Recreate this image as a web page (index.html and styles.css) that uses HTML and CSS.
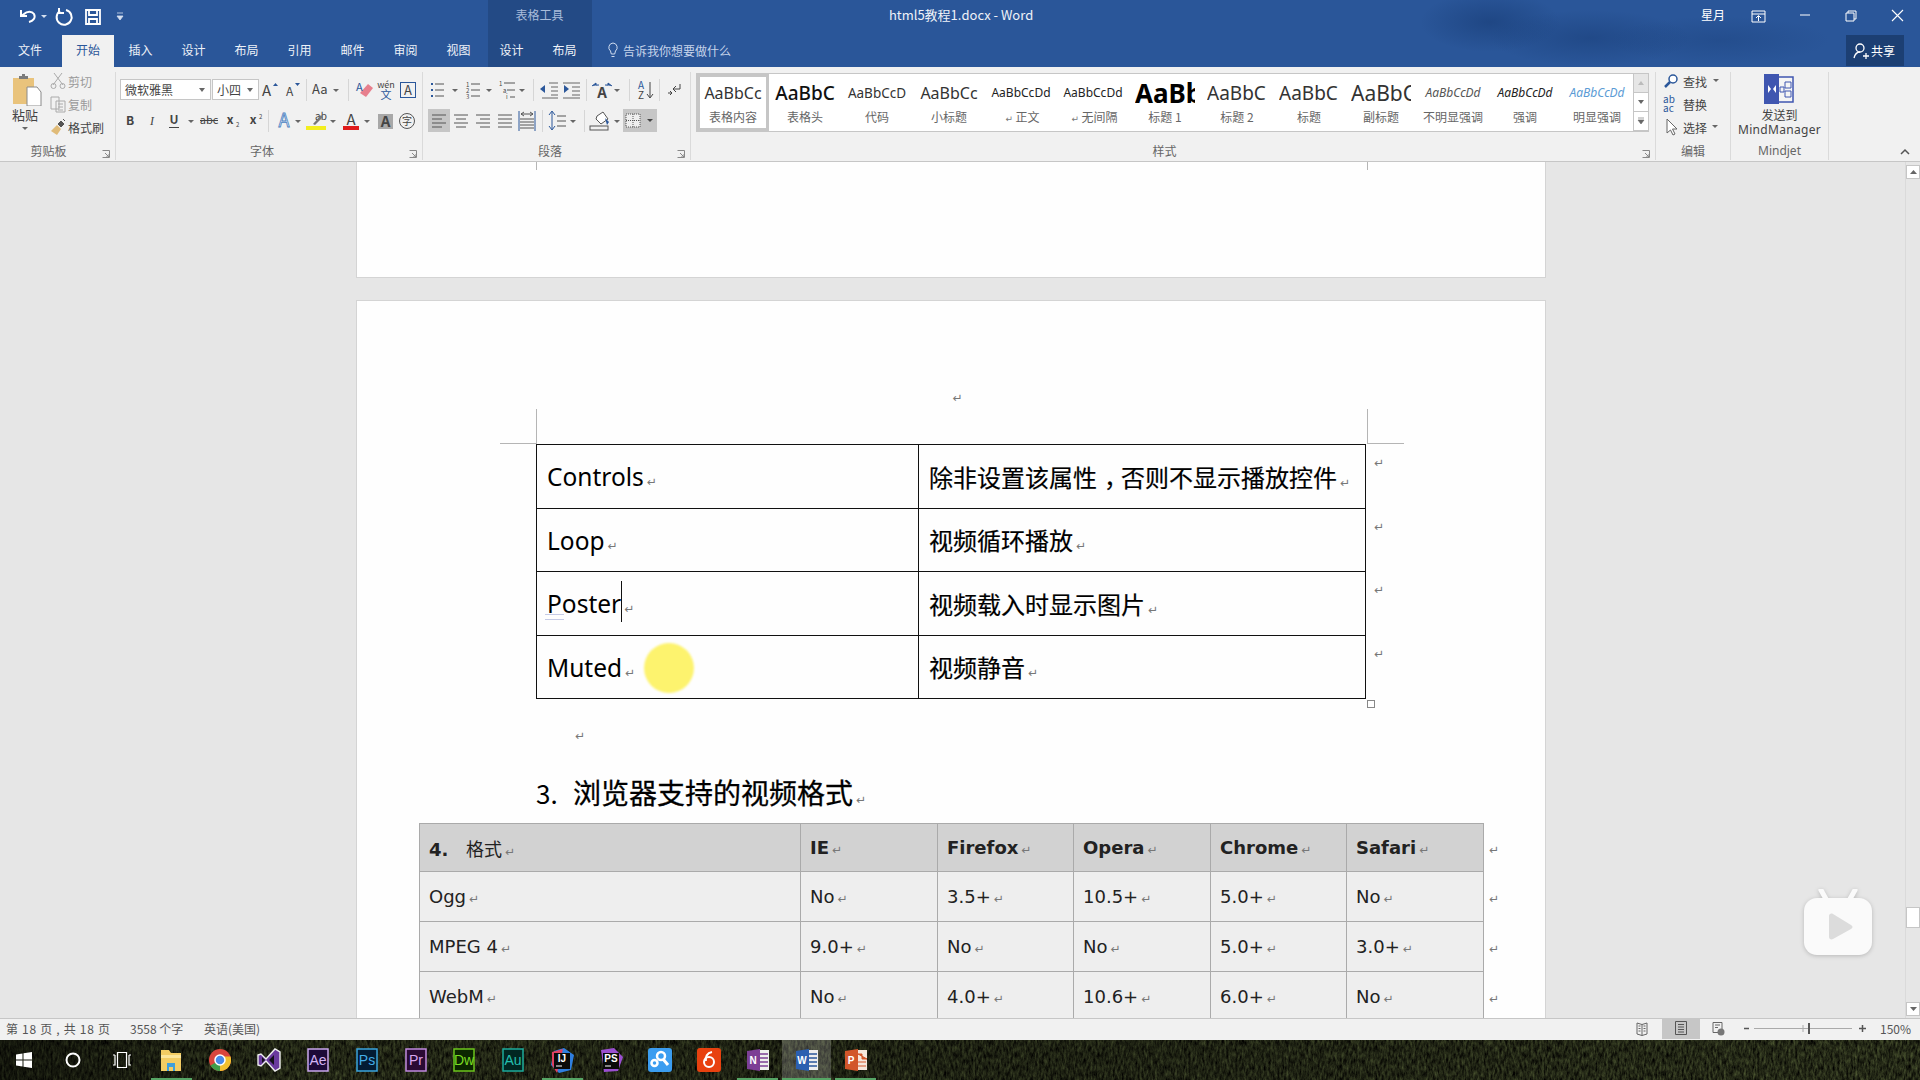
FILE: index.html
```html
<!DOCTYPE html>
<html lang="zh-CN">
<head>
    <meta charset="UTF-8">
    <title>html5教程1.docx - Word</title>
    <link rel="stylesheet" href="styles.css">
</head>
<body>
<div class="app">
    <!-- title bar + tabs -->
    <header class="titlebar">
        <div class="context-band"></div>
        <div class="title-row">
            <div class="qat">
                <svg width="28" height="35"><path d="M18 22c4-1 7-4 5-8-2-3-7-3-10 0l-3 2M10 10v6h6" fill="none" stroke="#fff" stroke-width="2"/></svg>
                <svg width="12" height="35"><path d="M2 15h6l-3 3z" fill="#d5e0f0"/></svg>
                <svg width="24" height="35"><path d="M15 10a7.500 7.500 0 1 1-6 1M8 8v5h5" fill="none" stroke="#fff" stroke-width="2"/></svg>
                <svg width="36" height="35"><path d="M11 10h14v14H11zM14 10v5h8v-5M14 24v-5h8v5" fill="none" stroke="#fff" stroke-width="1.800"/></svg>
                <svg width="20" height="35"><path d="M6 13h6M6 16h6l-3 4z" fill="#d5e0f0" stroke="#d5e0f0" stroke-width=".8"/></svg>
            </div>
            <div class="context-label">表格工具</div>
            <div class="doc-title">html5教程1.docx - Word</div>
            <div class="window-ctl">
                <span class="account">星月</span>
                <svg width="37" height="35"><path d="M6 12h13v11H6zM6 15h13M12.500 22v-5M10 19l2.500-2.500L15 19" fill="none" stroke="#fff"/></svg>
                <svg width="45" height="35"><path d="M17 16h10" stroke="#fff"/></svg>
                <svg width="46" height="35"><path d="M18 14h8v8h-8zM20 14v-2h8v8h-2" fill="none" stroke="#fff"/></svg>
                <svg width="46" height="35"><path d="M18 11l11 11M29 11L18 22" stroke="#fff" stroke-width="1.100"/></svg>
            </div>
        </div>
        <nav class="tab-row">
            <a class="tab tab-file">文件</a>
            <a class="tab tab-active">开始</a>
            <a class="tab">插入</a>
            <a class="tab">设计</a>
            <a class="tab">布局</a>
            <a class="tab">引用</a>
            <a class="tab">邮件</a>
            <a class="tab">审阅</a>
            <a class="tab">视图</a>
            <a class="tab">设计</a>
            <a class="tab">布局</a>
            <div class="tell-me">
                <svg width="12" height="16"><path d="M6 1a4.500 4.500 0 0 0-2.500 8l.8 3h3.400l.8-3A4.500 4.500 0 0 0 6 1zM4.500 14.500h3" fill="none" stroke="#cfdcf0"/></svg>
                <span>告诉我你想要做什么</span>
            </div>
            <div class="share">
                <svg width="18" height="18"><circle cx="8" cy="6" r="4" fill="none" stroke="#fff" stroke-width="1.300"/><path d="M2 16c1-4 3-6 6-6M11 14h6M14 11v6" fill="none" stroke="#fff" stroke-width="1.300"/></svg>
                <span>共享</span>
            </div>
        </nav>
    </header>

    <!-- ribbon -->
    <section class="ribbon">
        <div class="group group-clip">
            <div class="clip-body">
                <div class="paste">
                    <svg width="34" height="32">
                        <rect x="5" y="4" width="21" height="26" fill="#e9c37c"/>
                        <path d="M11 5h9V2h-3V0h-3v2h-3z" fill="#7b7b7b"/>
                        <path d="M19 13h10l4 5v14H19z" fill="#fff" stroke="#8a8a8a"/>
                    </svg>
                    <span>粘贴</span>
                    <svg width="10" height="8"><path d="M2 3h6l-3 3z" fill="#666"/></svg>
                </div>
                <div class="clip-list">
                    <div class="clip-row muted">
                        <svg width="16" height="18"><path d="M4 1l9 12M12 1L3 13" stroke="#aaa" fill="none"/><circle cx="3.500" cy="14" r="2.500" fill="none" stroke="#aaa"/><circle cx="12.500" cy="14" r="2.500" fill="none" stroke="#aaa"/></svg>
                        <span>剪切</span>
                    </div>
                    <div class="clip-row muted">
                        <svg width="16" height="18"><path d="M1 2h8v12H1zM6 6h9v11H6zM8 9h5M8 12h5M8 15h5" fill="#f1f1f1" stroke="#aaa"/></svg>
                        <span>复制</span>
                    </div>
                    <div class="clip-row">
                        <svg width="16" height="18"><path d="M1 13l6-6 4 4-4 6z" fill="#e0bb78"/><path d="M8 6l3-3 3 3-3 3zM13 1l2 2" fill="#555" stroke="#555"/></svg>
                        <span>格式刷</span>
                    </div>
                </div>
            </div>
            <div class="group-label">剪贴板</div>
            <svg class="launcher" width="8" height="8"><path d="M.5.500h7v7h-7M3 3l4 4M7 4v3H4" fill="none" stroke="#888"/></svg>
        </div>

        <div class="group group-font">
            <div class="tool-row first-row">
                <div class="combo combo-font"><span>微软雅黑</span><svg width="8" height="6"><path d="M1 1h6L4 5z" fill="#666"/></svg></div>
                <div class="combo combo-size"><span>小四</span><svg width="8" height="6"><path d="M1 1h6L4 5z" fill="#666"/></svg></div>
                <svg width="22" height="23"><text x="3" y="18" font-size="15">A</text><path d="M14 8l2.500-3L19 8z" fill="#2b579a"/></svg>
                <svg width="22" height="23"><text x="5" y="18" font-size="12">A</text><path d="M14 5h5l-2.500 3z" fill="#2b579a"/></svg>
                <i class="sep"></i>
                <svg width="35" height="23"><text x="2" y="16" font-size="13">Aa</text><path d="M23 11h6l-3 3z" fill="#666"/></svg>
                <i class="sep"></i>
                <svg width="24" height="23"><path d="M8 15l8-9 5 4-7 9z" fill="#e77f8d"/><text x="4" y="13" font-size="11" fill="#2b579a">A</text></svg>
                <svg width="20" height="23"><text x="10" y="10" font-size="9" text-anchor="middle">wén</text><text x="10" y="21" font-size="11" text-anchor="middle" fill="#2b579a">文</text></svg>
                <svg width="24" height="23"><rect x="4.500" y="4.500" width="15" height="15" fill="none" stroke="#2b579a"/><text x="12" y="17" font-size="13" text-anchor="middle">A</text></svg>
            </div>
            <div class="tool-row">
                <svg width="21" height="23"><text x="10" y="16" font-size="12" font-weight="700" text-anchor="middle">B</text></svg>
                <svg width="22" height="23"><text x="11" y="16" font-size="12" font-style="italic" text-anchor="middle" font-family="Liberation Serif">I</text></svg>
                <svg width="36" height="23"><text x="11" y="15" font-size="12" font-weight="700" text-anchor="middle">U</text><path d="M6 18.500h10" stroke="#444"/><path d="M25 11h6l-3 3z" fill="#666"/></svg>
                <svg width="20" height="23"><text x="10" y="15" font-size="11" text-anchor="middle">abc</text><path d="M1 11.500h18" stroke="#444"/></svg>
                <svg width="24" height="23"><text x="11" y="15" font-size="12" font-weight="700" text-anchor="middle">x</text><text x="17" y="18" font-size="6">2</text></svg>
                <svg width="22" height="23"><text x="10" y="15" font-size="12" font-weight="700" text-anchor="middle">x</text><text x="16" y="10" font-size="6">2</text></svg>
                <i class="sep"></i>
                <svg width="32" height="23"><text x="12" y="18" font-size="18" text-anchor="middle" fill="#dbe8f7" stroke="#4a7fc0" stroke-width=".8">A</text><path d="M23 11h6l-3 3z" fill="#666"/></svg>
                <svg width="35" height="23"><text x="11" y="11" font-size="10">ab</text><path d="M9 15l8-9 2 2-8 8z" fill="#777"/><rect x="2" y="17" width="20" height="4" fill="#f3ee1f"/><path d="M26 11h6l-3 3z" fill="#666"/></svg>
                <svg width="34" height="23"><text x="12" y="16" font-size="15" text-anchor="middle">A</text><rect x="4" y="17" width="16" height="4" fill="#e01b1b"/><path d="M25 11h6l-3 3z" fill="#666"/></svg>
                <svg width="24" height="23"><rect x="5" y="5" width="15" height="15" fill="#a8a8a8"/><text x="12.500" y="18" font-size="15" font-weight="700" text-anchor="middle">A</text></svg>
                <svg width="20" height="23"><circle cx="10" cy="12" r="7.500" fill="none" stroke="#555"/><text x="10" y="16" font-size="10" text-anchor="middle">字</text></svg>
            </div>
            <div class="group-label">字体</div>
            <svg class="launcher" width="8" height="8"><path d="M.5.500h7v7h-7M3 3l4 4M7 4v3H4" fill="none" stroke="#888"/></svg>
        </div>

        <div class="group group-para">
            <div class="tool-row first-row">
                <svg width="35" height="23"><path d="M7 6h9M7 12h9M7 18h9" stroke="#555"/><path d="M3 6h2M3 12h2M3 18h2" stroke="#2b579a" stroke-width="2"/><path d="M24 11h6l-3 3z" fill="#666"/></svg>
                <svg width="34" height="23"><path d="M8 6h9M8 12h9M8 18h9" stroke="#555"/><text x="3" y="9" font-size="6">1</text><text x="3" y="15" font-size="6">2</text><text x="3" y="21" font-size="6">3</text><path d="M23 11h6l-3 3z" fill="#666"/></svg>
                <svg width="33" height="23"><path d="M7 5h11M10 12h8M13 19h5" stroke="#555"/><text x="2" y="8" font-size="6">1</text><text x="6" y="15" font-size="6">a</text><text x="9" y="21" font-size="6">i</text><path d="M22 11h6l-3 3z" fill="#666"/></svg>
                <i class="sep"></i>
                <svg width="23" height="23"><path d="M12 5h9M14 9h7M14 13h7M14 17h7M5 20h16" stroke="#666"/><path d="M3 11l5-4v8z" fill="#2b579a"/></svg>
                <svg width="23" height="23"><path d="M3 5h17M12 9h8M12 13h8M12 17h8M3 20h17" stroke="#666"/><path d="M9 11L4 7v8z" fill="#2b579a"/></svg>
                <i class="sep"></i>
                <svg width="36" height="23"><text x="12" y="20" font-size="15" text-anchor="middle" font-weight="700">A</text><path d="M2 8l4-3v2h3M22 8l-4-3v2h-3" fill="#2b579a" stroke="#2b579a"/><path d="M24 11h6l-3 3z" fill="#666"/></svg>
                <i class="sep"></i>
                <svg width="23" height="23"><text x="8" y="11" font-size="10" text-anchor="middle" fill="#2b579a">A</text><text x="8" y="21" font-size="10" text-anchor="middle">Z</text><path d="M17 4v15M14 16l3 4 3-4" fill="none" stroke="#444"/></svg>
                <i class="sep"></i>
                <svg width="24" height="23"><path d="M17 6v5h-6M13 8l-3 3 3 3M9 15h-4M7 13l2 2-2 2" fill="none" stroke="#444"/></svg>
            </div>
            <div class="tool-row">
                <svg class="tool-on" width="22" height="23"><path d="M4 6h14M4 10h10M4 14h14M4 18h10" stroke="#555"/></svg>
                <svg width="22" height="23"><path d="M4 6h14M6 10h10M4 14h14M6 18h10" stroke="#555"/></svg>
                <svg width="22" height="23"><path d="M4 6h14M8 10h10M4 14h14M8 18h10" stroke="#555"/></svg>
                <svg width="22" height="23"><path d="M4 6h14M4 10h14M4 14h14M4 18h14" stroke="#555"/></svg>
                <svg width="23" height="23"><path d="M3 2v20M19 2v20" stroke="#2b579a"/><path d="M5 5h12M8 3L5 5l3 2M14 3l3 2-3 2M4 10h14M4 13h14M4 16h14M4 19h14" fill="none" stroke="#555"/></svg>
                <i class="sep"></i>
                <svg width="35" height="23"><path d="M6 3v17M3 6l3-4 3 4M3 17l3 4 3-4" fill="none" stroke="#2b579a"/><path d="M11 7h9M11 12h9M11 17h9" stroke="#555"/><path d="M24 11h6l-3 3z" fill="#666"/></svg>
                <i class="sep"></i>
                <svg width="35" height="23"><path d="M9 7l6-4 5 7-7 5-5-5z" fill="#fff" stroke="#555"/><path d="M17 9l4 4-2 3z" fill="#2b579a"/><rect x="2" y="17" width="18" height="4" fill="#f1f1f1" stroke="#555"/><path d="M26 11h6l-3 3z" fill="#666"/></svg>
                <svg class="tool-on" width="34" height="23"><rect x="3" y="5" width="14" height="13" fill="#eee" stroke="#555" stroke-dasharray="1 1"/><path d="M10 5v13M3 11.500h14" stroke="#555" stroke-dasharray="1 1"/><path d="M24 10h6l-3 3z" fill="#444"/></svg>
            </div>
            <div class="group-label">段落</div>
            <svg class="launcher" width="8" height="8"><path d="M.5.500h7v7h-7M3 3l4 4M7 4v3H4" fill="none" stroke="#888"/></svg>
        </div>

        <div class="group group-styles">
            <div class="gallery">
                <div class="style-item style-current"><div class="preview">AaBbCc</div><div class="style-name">表格内容</div></div>
                <div class="style-item"><div class="preview pv-head">AaBbC</div><div class="style-name">表格头</div></div>
                <div class="style-item"><div class="preview pv-code">AaBbCcD</div><div class="style-name">代码</div></div>
                <div class="style-item"><div class="preview">AaBbCc</div><div class="style-name">小标题</div></div>
                <div class="style-item"><div class="preview pv-small">AaBbCcDd</div><div class="style-name"><span class="ret">↵</span> 正文</div></div>
                <div class="style-item"><div class="preview pv-small">AaBbCcDd</div><div class="style-name"><span class="ret">↵</span> 无间隔</div></div>
                <div class="style-item"><div class="preview pv-h1">AaBbC</div><div class="style-name">标题 1</div></div>
                <div class="style-item"><div class="preview pv-h2">AaBbC</div><div class="style-name">标题 2</div></div>
                <div class="style-item"><div class="preview pv-h2">AaBbC</div><div class="style-name">标题</div></div>
                <div class="style-item"><div class="preview pv-sub">AaBbC</div><div class="style-name">副标题</div></div>
                <div class="style-item"><div class="preview pv-em pv-faint">AaBbCcDd</div><div class="style-name">不明显强调</div></div>
                <div class="style-item"><div class="preview pv-em">AaBbCcDd</div><div class="style-name">强调</div></div>
                <div class="style-item"><div class="preview pv-em pv-blue">AaBbCcDd</div><div class="style-name">明显强调</div></div>
                <div class="gallery-scroll">
                    <div class="gs-up"><svg width="8" height="6"><path d="M1 5h6L4 1z" fill="#bbb"/></svg></div>
                    <div><svg width="8" height="6"><path d="M1 1h6L4 5z" fill="#666"/></svg></div>
                    <div><svg width="8" height="8"><path d="M1 1h6M1 3h6L4 7z" fill="#666" stroke="#666" stroke-width=".6"/></svg></div>
                </div>
            </div>
            <div class="group-label">样式</div>
            <svg class="launcher" width="8" height="8"><path d="M.5.500h7v7h-7M3 3l4 4M7 4v3H4" fill="none" stroke="#888"/></svg>
        </div>

        <div class="group group-edit">
            <div class="edit-list">
                <div class="edit-row"><svg width="16" height="16"><circle cx="10" cy="6" r="4" fill="#fff" stroke="#2b579a" stroke-width="1.500"/><path d="M7 9l-5 5" stroke="#2b579a" stroke-width="2.500"/></svg><span>查找</span><svg width="10" height="6"><path d="M2 1h6L5 4z" fill="#666"/></svg></div>
                <div class="edit-row"><svg width="16" height="18"><text x="0" y="8" font-size="10" fill="#2b579a">ab</text><text x="0" y="17" font-size="10" fill="#2b579a">ac</text></svg><span>替换</span></div>
                <div class="edit-row"><svg width="16" height="18"><path d="M4 1v14l3.500-3 2.500 5 2-1-2.500-5H14z" fill="#fff" stroke="#666"/></svg><span>选择</span><svg width="10" height="6"><path d="M1 1h6L4 4z" fill="#666"/></svg></div>
            </div>
            <div class="group-label">编辑</div>
        </div>

        <div class="group group-mind">
            <div class="mind-send">
                <svg width="30" height="30">
                    <rect x="1" y="3" width="28" height="25" fill="#f5f5f5" stroke="#3f56b0" stroke-width="1.500"/>
                    <rect x="0" y="0" width="15" height="30" fill="#3f56b0"/>
                    <path d="M4 11l3 4-3 4zM12 11l-3 4 3 4z" fill="#fff"/>
                    <path d="M16 13h4v5h-4zM21 8h6v6h-6zM21 17h6v6h-6z" fill="none" stroke="#3f56b0"/>
                </svg>
                <span class="mind-line">发送到</span>
                <span class="mind-line mind-wide">MindManager</span>
            </div>
            <div class="group-label">Mindjet</div>
        </div>
        <div class="ribbon-end">
            <svg width="12" height="8"><path d="M2 6l4-4 4 4" fill="none" stroke="#555" stroke-width="1.500"/></svg>
        </div>
    </section>

    <!-- document -->
    <main class="doc">
        <div class="pages">
            <div class="page page-prev">
                <i class="crop-v crop-prev-l"></i>
                <i class="crop-v crop-prev-r"></i>
            </div>
            <div class="page page-cur">
                <i class="crop-v crop-l"></i>
                <i class="crop-v crop-r"></i>
                <i class="crop-h crop-hl"></i>
                <i class="crop-h crop-hr"></i>

                <p class="top-mark"><span class="ret">↵</span></p>

                <table class="attr-table">
                    <tr><td class="attr-name">Controls<span class="ret">↵</span></td><td class="attr-desc">除非设置该属性<span class="zh-comma">，</span>否则不显示播放控件<span class="ret">↵</span></td><td class="row-end"><span class="ret">↵</span></td></tr>
                    <tr><td class="attr-name">Loop<span class="ret">↵</span></td><td class="attr-desc">视频循环播放<span class="ret">↵</span></td><td class="row-end"><span class="ret">↵</span></td></tr>
                    <tr><td class="attr-name"><span class="proof">P</span>oster<i class="caret"></i><span class="ret">↵</span></td><td class="attr-desc">视频载入时显示图片<span class="ret">↵</span></td><td class="row-end"><span class="ret">↵</span></td></tr>
                    <tr><td class="attr-name">Muted<span class="ret">↵</span></td><td class="attr-desc">视频静音<span class="ret">↵</span></td><td class="row-end"><span class="ret">↵</span></td></tr>
                </table>
                <i class="table-handle"></i>
                <i class="mouse-spot"></i>

                <p class="after-mark"><span class="ret">↵</span></p>
                <h2 class="section-title"><span class="num">3.</span>浏览器支持的视频格式<span class="ret">↵</span></h2>

                <table class="format-table">
                    <tr class="fmt-head">
                        <td class="fc1"><b class="fmt-num">4.</b><span class="fmt-zh">格式</span><span class="ret">↵</span></td>
                        <td class="fc2">IE<span class="ret">↵</span></td>
                        <td class="fc3">Firefox<span class="ret">↵</span></td>
                        <td class="fc4">Opera<span class="ret">↵</span></td>
                        <td class="fc5">Chrome<span class="ret">↵</span></td>
                        <td class="fc6">Safari<span class="ret">↵</span></td>
                        <td class="fmt-end"><span class="ret">↵</span></td>
                    </tr>
                    <tr class="fmt-row">
                        <td>Ogg<span class="ret">↵</span></td><td>No<span class="ret">↵</span></td><td>3.5+<span class="ret">↵</span></td><td>10.5+<span class="ret">↵</span></td><td>5.0+<span class="ret">↵</span></td><td>No<span class="ret">↵</span></td><td class="fmt-end"><span class="ret">↵</span></td>
                    </tr>
                    <tr class="fmt-row">
                        <td>MPEG 4<span class="ret">↵</span></td><td>9.0+<span class="ret">↵</span></td><td>No<span class="ret">↵</span></td><td>No<span class="ret">↵</span></td><td>5.0+<span class="ret">↵</span></td><td>3.0+<span class="ret">↵</span></td><td class="fmt-end"><span class="ret">↵</span></td>
                    </tr>
                    <tr class="fmt-row">
                        <td>WebM<span class="ret">↵</span></td><td>No<span class="ret">↵</span></td><td>4.0+<span class="ret">↵</span></td><td>10.6+<span class="ret">↵</span></td><td>6.0+<span class="ret">↵</span></td><td>No<span class="ret">↵</span></td><td class="fmt-end"><span class="ret">↵</span></td>
                    </tr>
                </table>
            </div>
        </div>
        <aside class="scrollbar">
            <div class="sb-btn sb-up"><svg width="9" height="6"><path d="M1 5h7L4.500 1z" fill="#666"/></svg></div>
            <div class="sb-thumb"></div>
            <div class="sb-btn sb-down"><svg width="9" height="6"><path d="M1 1h7L4.500 5z" fill="#666"/></svg></div>
        </aside>
        <svg class="tv-badge" width="68" height="66">
            <path d="M22 10L17 1M46 10l5-9" stroke="#fafafa" stroke-width="5" stroke-linecap="round"/>
            <rect x="0" y="9" width="68" height="57" rx="13" fill="#fafafa"/>
            <path d="M25 27c0-2 2-3 4-2l18 11c2 1 2 3 0 4L29 50c-2 1-4 0-4-2z" fill="#dcdcdc"/>
        </svg>
    </main>

    <!-- status bar -->
    <footer class="statusbar">
        <span class="st-item st-pages">第 18 页 , 共 18 页</span>
        <span class="st-item st-words">3558 个字</span>
        <span class="st-item">英语(美国)</span>
        <div class="st-right">
            <svg width="31" height="21"><path d="M6 5l5 1.500L16 5v11l-5 1.500L6 16zM11 6.500v11M7.500 8h2M7.500 10.500h2M7.500 13h2M12.500 8h2M12.500 10.500h2M12.500 13h2" fill="none" stroke="#666"/></svg>
            <div class="st-view-on"><svg width="14" height="16"><path d="M1.500 1.500h11v13h-11zM4 4.500h6M4 7h6M4 9.500h6M4 12h6" fill="none" stroke="#555"/></svg></div>
            <svg width="36" height="21"><path d="M13 4.500h9v10h-9zM15 7h5M15 9.500h3" fill="none" stroke="#666"/><circle cx="21" cy="14" r="3.500" fill="#777"/></svg>
            <svg width="135" height="21"><path d="M8 10.500h5M123 10.500h7M126.500 7v7" stroke="#555" stroke-width="1.500"/><path d="M18 10.500h98" stroke="#aaa"/><path d="M67 7v7" stroke="#aaa"/><path d="M73 5v11" stroke="#555" stroke-width="2"/></svg>
            <span class="st-zoom">150%</span>
        </div>
    </footer>

    <!-- windows taskbar -->
    <div class="taskbar">
        <svg class="wallpaper" width="1920" height="40">
            <filter id="grass" x="0" y="0" width="100%" height="100%" color-interpolation-filters="sRGB">
                <feTurbulence type="fractalNoise" baseFrequency=".45 .16" numOctaves="4" seed="11"/>
                <feColorMatrix values="0 .42 0 0 -.05  0 .48 0 0 -.06  0 .28 0 0 -.04  0 0 0 0 1"/>
            </filter>
            <linearGradient id="shade" x1="0" x2="1" y1="0" y2="0">
                <stop offset="0" stop-color="#000" stop-opacity=".55"/>
                <stop offset=".15" stop-color="#000" stop-opacity=".2"/>
                <stop offset=".55" stop-color="#000" stop-opacity=".3"/>
                <stop offset="1" stop-color="#000" stop-opacity=".1"/>
            </linearGradient>
            <rect width="1920" height="40" filter="url(#grass)"/>
            <rect width="1920" height="40" fill="url(#shade)"/>
        </svg>
        <div class="task-item">
            <svg width="18" height="18"><path d="M1 3.500l6.500-1v6H1zM8.500 2.300L17 1v7.500H8.500zM1 9.500h6.500v6l-6.500-1zM8.500 9.500H17V17l-8.500-1.300z" fill="#fff"/></svg>
        </div>
        <div class="task-item">
            <svg width="18" height="18"><circle cx="9" cy="9" r="6.500" fill="none" stroke="#fff" stroke-width="2"/></svg>
        </div>
        <div class="task-item">
            <svg width="20" height="18"><path d="M5.500 1.500h9v15h-9zM3 4v10H1M17 4v10h2M3 4H1M17 4h2" fill="none" stroke="#fff" stroke-width="1.200"/></svg>
        </div>
        <div class="task-item task-open">
            <svg width="22" height="24"><path d="M1 2h8l2 3h10v18H1z" fill="#f3cc63"/><path d="M1 7h20v3H1z" fill="#fce59a"/><path d="M7 15h8v8h-2v-4H9v4H7z" fill="#3f9fdc"/></svg>
        </div>
        <div class="task-item">
            <svg width="24" height="24"><circle cx="12" cy="12" r="11" fill="#d9463d"/><path d="M12 12L2.500 17.500A11 11 0 0 0 12 23z" fill="#3f9d4a"/><path d="M12 12v11A11 11 0 0 0 22.500 8.500H12z" fill="#f2c02e"/><circle cx="12" cy="12" r="5" fill="#4a8be8" stroke="#fff" stroke-width="1.500"/></svg>
        </div>
        <div class="task-item">
            <svg width="26" height="26"><path d="M2 8l3-1 5 5 9-10 5 3v16l-5 3-9-10-5 5-3-1z" fill="#6a3a9e" stroke="#eee" stroke-width="1.400"/><path d="M6 10v6l3-3zM18 8l-5 5 5 5z" fill="#14101c"/></svg>
        </div>
        <div class="task-item">
            <svg width="22" height="24"><rect x="1" y="1" width="20" height="22" fill="#1c0a38" stroke="#c8a6ec" stroke-width="1.500"/><text class="brand" x="11" y="17" fill="#d3b4f3">Ae</text></svg>
        </div>
        <div class="task-item">
            <svg width="22" height="24"><rect x="1" y="1" width="20" height="22" fill="#031c33" stroke="#3ba4dc" stroke-width="1.500"/><text class="brand" x="11" y="17" fill="#44aee8">Ps</text></svg>
        </div>
        <div class="task-item">
            <svg width="22" height="24"><rect x="1" y="1" width="20" height="22" fill="#2a0a33" stroke="#c08ade" stroke-width="1.500"/><text class="brand" x="11" y="17" fill="#d9a6ef">Pr</text></svg>
        </div>
        <div class="task-item">
            <svg width="22" height="24"><rect x="1" y="1" width="20" height="22" fill="#0b2600" stroke="#6cc51d" stroke-width="1.500"/><text class="brand" x="11" y="17" fill="#7bdc22">Dw</text></svg>
        </div>
        <div class="task-item">
            <svg width="22" height="24"><rect x="1" y="1" width="20" height="22" fill="#012622" stroke="#1caa9a" stroke-width="1.500"/><text class="brand" x="11" y="17" fill="#25bfae">Au</text></svg>
        </div>
        <div class="task-item task-open">
            <svg width="26" height="26"><path d="M5 4l10-3 10 7-3 15-12 3-8-8z" fill="#2f7fe0"/><path d="M3 5l11-3-6 24-5-8z" fill="#e0405f"/><rect x="5" y="6" width="16" height="16" fill="#0a0a0a"/><text class="brand-s" x="13" y="15" fill="#fff">IJ</text><path d="M7 19h6" stroke="#fff"/></svg>
        </div>
        <div class="task-item">
            <svg width="26" height="26"><path d="M3 3l13-2 9 9-5 14-14 1z" fill="#9a4fd0"/><rect x="5" y="6" width="16" height="16" fill="#0a0a0a"/><text class="brand-s" x="13" y="15" fill="#fff">PS</text><path d="M7 19h6" stroke="#fff"/></svg>
        </div>
        <div class="task-item">
            <svg width="24" height="24"><rect width="24" height="24" rx="3" fill="#3b9df0"/><circle cx="13" cy="8" r="4" fill="none" stroke="#fff" stroke-width="2.500"/><circle cx="6.500" cy="15" r="3" fill="none" stroke="#fff" stroke-width="2.500"/><path d="M15 11l5 6" stroke="#fff" stroke-width="3"/></svg>
        </div>
        <div class="task-item">
            <svg width="24" height="24"><rect width="24" height="24" rx="3" fill="#e8410f"/><circle cx="12" cy="14" r="5" fill="none" stroke="#fff" stroke-width="2"/><path d="M15 4c-5 1-7 5-6 9" fill="none" stroke="#fff" stroke-width="2"/></svg>
        </div>
        <div class="task-item task-open">
            <svg width="24" height="24"><rect x="12" y="2" width="11" height="20" fill="#eee"/><path d="M14 6h8M14 10h8M14 14h8M14 18h8" stroke="#7c3f95" stroke-width="1.500"/><path d="M1 3l13-2v22L1 21z" fill="#7c3f95"/><text class="brand-s" x="7" y="16" fill="#fff">N</text></svg>
        </div>
        <div class="task-item task-open task-active">
            <svg width="24" height="24"><rect x="12" y="2" width="11" height="20" fill="#eee"/><path d="M14 6h8M14 10h8M14 14h8M14 18h8" stroke="#2b579a" stroke-width="1.500"/><path d="M1 3l13-2v22L1 21z" fill="#2b5fb0"/><text class="brand-s" x="7" y="16" fill="#fff">W</text></svg>
        </div>
        <div class="task-item task-open">
            <svg width="24" height="24"><rect x="12" y="2" width="11" height="20" fill="#f5e6dc"/><path d="M14 6h4v5h5zM14 14h8M14 18h8" fill="#d2562a" stroke="#d2562a"/><path d="M1 3l13-2v22L1 21z" fill="#d2562a"/><text class="brand-s" x="7" y="16" fill="#fff">P</text></svg>
        </div>
    </div>
</div>
</body>
</html>
```

FILE: styles.css
```css
* {
    box-sizing: border-box;
}

body {
    margin: 0;
    overflow: hidden;
    font-family: 'Noto Sans CJK SC', 'Noto Sans', sans-serif;
    font-size: 12px;
    color: #444;
}

.app {
    display: flex;
    flex-direction: column;
    width: 1920px;
    height: 1080px;
}

svg {
    display: block;
    flex: none;
    fill: #444;
    font-family: 'Noto Sans CJK SC', 'Noto Sans', sans-serif;
}

/* title bar */
.titlebar {
    position: relative;
    height: 67px;
    color: #fff;
    background-color: #2a5699;
    background-image:
        radial-gradient(ellipse 70px 30px at 1490px 22px, rgba(22, 58, 115, 0.55), transparent),
        radial-gradient(ellipse 100px 28px at 1590px 38px, rgba(22, 58, 115, 0.45), transparent),
        radial-gradient(ellipse 110px 24px at 1720px 40px, rgba(22, 58, 115, 0.3), transparent);
}

.context-band {
    position: absolute;
    left: 488px;
    top: 0;
    width: 104px;
    height: 67px;
    background-color: #234a85;
}

.title-row {
    position: relative;
    display: flex;
    height: 35px;
}

.qat {
    display: flex;
    width: 488px;
    padding-left: 11px;
}

.context-label {
    width: 104px;
    padding-left: 8px;
    line-height: 30px;
    text-align: center;
    font-size: 12px;
    color: #a9bcdb;
}

.doc-title {
    width: 734px;
    padding-left: 20px;
    line-height: 30px;
    text-align: center;
    font-size: 13px;
    color: #eef2f8;
}

.window-ctl {
    display: flex;
    flex: 1;
    padding-left: 386px;
}

.account {
    width: 24px;
    margin-right: 21px;
    line-height: 30px;
    white-space: nowrap;
}

.window-ctl svg {
    margin-top: -1px;
}

.tab-row {
    position: relative;
    display: flex;
    height: 32px;
    padding-left: 5px;
}

.tab {
    width: 53px;
    line-height: 30px;
    text-align: center;
    font-size: 12px;
    color: #eef2f8;
}

.tab-file {
    width: 50px;
    margin-right: 7px;
}

.tab-active {
    width: 52px;
    color: #2b579a;
    background-color: #f1f1f1;
}

.tell-me {
    display: flex;
    align-items: center;
    gap: 4px;
    height: 30px;
    margin-left: 16px;
    color: #c6d4ea;
}

.share {
    display: flex;
    align-items: center;
    gap: 1px;
    width: 58px;
    height: 31px;
    margin-left: auto;
    margin-right: 16px;
    padding-left: 6px;
    background-color: #1c3f73;
    color: #fff;
}

/* ribbon */
.ribbon {
    display: flex;
    height: 95px;
    background-color: #f1f1f1;
    border-bottom: 1px solid #c6c6c6;
}

.group {
    position: relative;
    display: flex;
    flex-direction: column;
    flex: none;
    height: 88px;
    margin-top: 5px;
    border-right: 1px solid #dadada;
}

.group-clip { width: 116px; }
.group-font { width: 307px; padding-left: 4px; }
.group-para { width: 268px; padding-left: 5px; }
.group-styles { width: 965px; padding-left: 5px; }
.group-edit { width: 75px; }
.group-mind { width: 98px; }

.group-label {
    margin-top: auto;
    height: 18px;
    line-height: 18px;
    text-align: center;
    color: #666;
}

.group-clip .group-label,
.group-font .group-label,
.group-para .group-label { padding-right: 18px; }
.group-styles .group-label { padding-right: 22px; }

.launcher {
    position: absolute;
    right: 5px;
    bottom: 2px;
}

.clip-body {
    display: flex;
}

.paste {
    display: flex;
    flex-direction: column;
    align-items: center;
    width: 34px;
    margin: 2px 8px 0;
}

.paste span {
    line-height: 18px;
    font-size: 13px;
}

.clip-list {
    display: flex;
    flex-direction: column;
    gap: 5px;
}

.clip-row {
    display: flex;
    align-items: center;
    gap: 2px;
    height: 18px;
}

.muted {
    color: #9a9a9a;
}

.tool-row {
    display: flex;
    align-items: center;
    height: 23px;
}

.first-row {
    margin-top: 6px;
    margin-bottom: 8px;
}

.sep {
    flex: none;
    width: 1px;
    height: 22px;
    margin: 0 3px;
    background-color: #d6d6d6;
}

.tool-on {
    background-color: #c6c6c6;
}

.combo {
    display: flex;
    align-items: center;
    justify-content: space-between;
    height: 21px;
    padding: 0 4px;
    background-color: #fff;
    border: 1px solid #c6c6c6;
}

.combo-font { width: 91px; margin-right: 1px; }
.combo-size { width: 47px; }

/* styles gallery */
.gallery {
    display: flex;
    width: 953px;
    height: 59px;
    margin-top: 1px;
    background-color: #fff;
    border: 1px solid #c6c6c6;
}

.style-item {
    flex: none;
    width: 72px;
    text-align: center;
    overflow: hidden;
    padding: 5px 6px 0;
}

.style-current {
    padding: 2px 3px 0;
    border: 3px solid #c6c6c6;
}

.preview {
    height: 28px;
    line-height: 28px;
    font-size: 16px;
    color: #333;
    white-space: nowrap;
    overflow: hidden;
    font-family: 'Noto Sans', sans-serif;
}

.pv-head { font-size: 19px; font-weight: 500; color: #111; }
.pv-code { font-size: 13.5px; }
.pv-small { font-size: 12px; color: #222; }
.pv-h1 { font-size: 26px; font-weight: 700; color: #000; text-align: left; }
.pv-h2 { font-size: 19px; text-align: left; }
.pv-sub { font-size: 21px; text-align: left; }
.pv-em { font-size: 12px; font-style: italic; color: #222; }
.pv-faint { color: #555; }
.pv-blue { color: #5b9bd5; }

.style-name {
    line-height: 20px;
    font-size: 12px;
    color: #666;
    white-space: nowrap;
}

.gallery-scroll {
    display: flex;
    flex-direction: column;
    flex: 1;
    border-left: 1px solid #c6c6c6;
}

.gallery-scroll div {
    display: flex;
    flex: 1;
    align-items: center;
    justify-content: center;
    border-bottom: 1px solid #c6c6c6;
}

.gallery-scroll .gs-up {
    background-color: #e6e6e6;
}

.edit-list {
    display: flex;
    flex-direction: column;
    gap: 5px;
    padding-left: 7px;
}

.edit-row {
    display: flex;
    align-items: center;
    gap: 4px;
    height: 18px;
}

.group-mind {
    align-items: center;
}

.mind-send {
    display: flex;
    flex-direction: column;
    align-items: center;
    padding-top: 2px;
}

.mind-line {
    line-height: 15px;
    font-size: 12px;
}

.mind-send svg {
    margin-bottom: 3px;
}

.mind-wide {
    font-family: 'Noto Sans', sans-serif;
    letter-spacing: 0.3px;
}

.group-mind .group-label {
    font-family: 'Noto Sans', sans-serif;
}

.ribbon-end {
    display: flex;
    flex: 1;
    align-items: flex-end;
    justify-content: flex-end;
    padding: 0 9px 5px 0;
}

/* document area */
.doc {
    position: relative;
    display: flex;
    height: 856px;
    background-color: #e6e6e6;
    overflow: hidden;
}

.pages {
    flex: 1;
    padding-left: 356px;
}

.page {
    position: relative;
    width: 1190px;
    background-color: #fefefe;
    border: 1px solid #d4d4d4;
}

.page-prev {
    height: 116px;
    border-top: 0;
}

.page-cur {
    height: 900px;
    margin-top: 22px;
    padding: 88px 179px 0;
    color: #000;
}

.crop-v,
.crop-h {
    position: absolute;
    background-color: #b5b5b5;
}

.crop-v { width: 1px; }
.crop-h { height: 1px; top: 142px; width: 37px; }

.crop-prev-l { left: 179px; top: 0; height: 8px; }
.crop-prev-r { left: 1010px; top: 0; height: 8px; }
.crop-l { left: 179px; top: 108px; height: 35px; }
.crop-r { left: 1010px; top: 108px; height: 35px; }
.crop-hl { left: 143px; }
.crop-hr { left: 1010px; }

.ret {
    margin-left: 3px;
    font-family: 'DejaVu Sans', sans-serif;
    font-size: 12px;
    font-weight: 400;
    color: #777;
    -webkit-text-stroke: 0;
}

.style-name .ret {
    font-size: 9px;
}

.top-mark {
    height: 55px;
    margin: 0;
    padding: 1px 0 0 10px;
    text-align: center;
    line-height: 14px;
}

.attr-table {
    border-collapse: collapse;
    table-layout: fixed;
    width: 849px;
    font-size: 24px;
}

.attr-table td {
    height: 63.5px;
    padding: 7px 0 0 10px;
    line-height: 30px;
}

.attr-name,
.attr-desc {
    border: 1.500px solid #111;
}

.attr-name {
    width: 382px;
    font-family: 'Noto Sans', sans-serif;
    font-size: 24.500px;
}

.attr-desc {
    width: 447px;
    -webkit-text-stroke: 0.2px;
}

.attr-table .row-end {
    padding: 0 0 32px 5px;
    line-height: 14px;
    -webkit-text-stroke: 0;
}

.zh-comma {
    display: inline-block;
    width: 24px;
    transform: translateX(7px);
}

.proof {
    position: relative;
}

.proof::after {
    content: "";
    position: absolute;
    left: -2px;
    right: -2px;
    bottom: 0;
    height: 4px;
    border-top: 1px solid #c5cbe6;
    border-bottom: 1px solid #c5cbe6;
}

.caret {
    position: absolute;
    width: 1px;
    height: 41px;
    margin-top: -8px;
    background-color: #111;
}

.table-handle {
    position: absolute;
    left: 1010px;
    top: 399px;
    width: 8px;
    height: 8px;
    background-color: #fff;
    border: 1px solid #888;
}

.mouse-spot {
    position: absolute;
    left: 287px;
    top: 342px;
    width: 50px;
    height: 50px;
    border-radius: 50%;
    background-color: #fdf36e;
    filter: blur(1px);
}

.after-mark {
    height: 75px;
    margin: 0;
    padding: 29px 0 0 36px;
    line-height: 14px;
}

.section-title {
    margin: 0;
    height: 49px;
    font-size: 28px;
    font-weight: 400;
    line-height: 36px;
    white-space: nowrap;
    -webkit-text-stroke: 0.3px;
}

.section-title .num {
    display: inline-block;
    width: 37px;
    font-size: 26px;
    -webkit-text-stroke: 0;
}

.format-table {
    border-collapse: collapse;
    table-layout: fixed;
    width: 1084px;
    margin-left: -117px;
    font-family: 'DejaVu Sans', sans-serif;
    font-size: 18px;
    color: #222;
}

.format-table td {
    padding: 0 0 0 9px;
    border: 1px solid #aaa;
    background-color: #eee;
}

.format-table .fc1 { width: 381px; }
.format-table .fc2 { width: 137px; }
.format-table .fc3 { width: 136px; }
.format-table .fc4 { width: 137px; }
.format-table .fc5 { width: 136px; }
.format-table .fc6 { width: 137px; }

.fmt-head td {
    height: 48px;
    font-weight: 700;
    background-color: #d2d2d2;
}

.fmt-row td {
    height: 50px;
}

.format-table .fmt-end {
    padding-left: 2px;
    border: 0;
    background: none;
}

.fmt-num {
    display: inline-block;
    width: 37px;
}

.fmt-zh {
    font-family: 'Noto Sans CJK SC', sans-serif;
    font-weight: 400;
}

/* scrollbar */
.scrollbar {
    display: flex;
    flex-direction: column;
    width: 15px;
    padding: 3px 0 2px;
    border-left: 1px solid #dadada;
}

.sb-btn {
    display: flex;
    align-items: center;
    justify-content: center;
    height: 14px;
    background-color: #fff;
    border: 1px solid #c6c6c6;
}

.sb-thumb {
    height: 21px;
    margin-top: 728px;
    background-color: #fff;
    border: 1px solid #c6c6c6;
}

.sb-down {
    margin-top: auto;
}

.tv-badge {
    position: absolute;
    left: 1804px;
    top: 727px;
    filter: drop-shadow(0 1px 2px rgba(0, 0, 0, 0.2));
}

/* status bar */
.statusbar {
    display: flex;
    align-items: center;
    height: 22px;
    padding: 0 0 3px 6px;
    background-color: #f1f1f1;
    border-top: 1px solid #c6c6c6;
    color: #555;
}

.st-pages { width: 124px; letter-spacing: 0.7px; }
.st-words { width: 74px; }

.st-right {
    display: flex;
    align-items: center;
    margin-left: auto;
}

.st-view-on {
    display: flex;
    align-items: center;
    justify-content: center;
    width: 38px;
    height: 21px;
    background-color: #c6c6c6;
}

.st-zoom {
    width: 49px;
    padding-left: 9px;
}

/* taskbar */
.taskbar {
    position: relative;
    display: flex;
    height: 40px;
    background-color: #1d1f15;
}

.wallpaper {
    position: absolute;
    left: 0;
    top: 0;
}

.task-item {
    position: relative;
    display: flex;
    align-items: center;
    justify-content: center;
    flex: none;
    width: 48.900px;
    height: 40px;
}

.task-open::after {
    content: "";
    position: absolute;
    left: 4px;
    right: 4px;
    bottom: 0;
    height: 2px;
    background-color: #56a565;
}

.task-active {
    background-color: rgba(255, 255, 255, 0.2);
}

.task-active::after {
    left: 0;
    right: 0;
}

.brand {
    font-family: 'Liberation Sans', sans-serif;
    font-size: 14px;
    text-anchor: middle;
}

.brand-s {
    font-family: 'Liberation Sans', sans-serif;
    font-size: 10px;
    font-weight: 700;
    text-anchor: middle;
}
```
